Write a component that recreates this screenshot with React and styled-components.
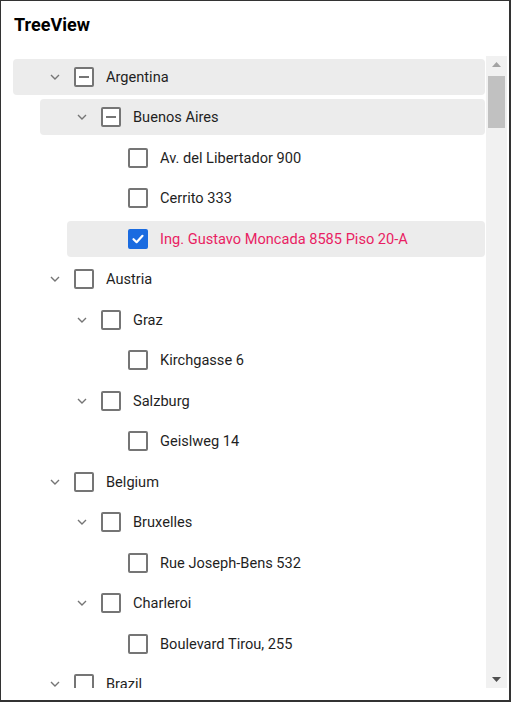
import React from "react";
import styled, { createGlobalStyle } from "styled-components";

const Global = createGlobalStyle`
  html, body { margin: 0; padding: 0; background: #fff; }
  body { font-family: Roboto, "Liberation Sans", Arial, sans-serif; }
  * { box-sizing: border-box; }
`;

const Frame = styled.div`
  width: 511px;
  height: 702px;
  border-style: solid;
  border-color: #333;
  border-width: 1px 2px 2px 1px;
  display: flex;
  flex-direction: column;
  overflow: hidden;
  background: #fff;
`;

const Header = styled.div`
  height: 55px;
  flex: none;
  padding: 13px 0 0 13px;
`;

const Title = styled.h1`
  margin: 0;
  font-size: 18px;
  line-height: 22px;
  font-weight: 700;
  color: #000;
`;

const ScrollArea = styled.div`
  display: flex;
  height: 632px;
  flex: none;
`;

const TreeList = styled.ul`
  list-style: none;
  margin: 0;
  padding: 2.5px 1px 0 12px;
  width: 485px;
  flex: none;
  overflow: hidden;
  display: flex;
  flex-direction: column;
  gap: 4.5px;
`;

const Row = styled.li`
  flex: none;
  height: 36px;
  margin-left: ${(p) => p.$level * 27}px;
  padding-left: 37px;
  display: flex;
  align-items: center;
  border-radius: 4px;
  background: ${(p) => (p.$highlight ? "#ececec" : "transparent")};
`;

const Toggle = styled.span`
  width: 10px;
  height: 20px;
  flex: none;
  display: flex;
  align-items: center;
  justify-content: center;
  color: #757575;
`;

const Box = styled.span`
  width: 20px;
  height: 20px;
  flex: none;
  margin-left: 14px;
  border-radius: 2px;
  border: 2px solid ${(p) => (p.$checked ? "#1a6be0" : "#757575")};
  background: ${(p) => (p.$checked ? "#1a6be0" : "#fff")};
  display: flex;
  align-items: center;
  justify-content: center;
`;

const Dash = styled.span`
  width: 10px;
  height: 2px;
  background: #757575;
`;

const Label = styled.span`
  margin-left: 12px;
  font-size: 14.6px;
  line-height: 20px;
  color: ${(p) => (p.$selected ? "#e91e63" : "#1f1f1f")};
  white-space: nowrap;
`;

const Scrollbar = styled.div`
  width: 21px;
  flex: none;
  background: #f1f1f1;
  display: flex;
  flex-direction: column;
  align-items: center;
`;

const Arrow = styled.div`
  height: 17px;
  width: 100%;
  flex: none;
  display: flex;
  align-items: center;
  justify-content: center;
`;

const Track = styled.div`
  flex: 1;
  width: 100%;
  padding: 3px 2px 0 2px;
`;

const Thumb = styled.div`
  height: 52px;
  background: #c1c1c1;
`;

const Chevron = () => (
  <svg width="10" height="6" viewBox="0 0 10 6">
    <path d="M1 1 L5 5 L9 1" fill="none" stroke="currentColor" strokeWidth="1.4" />
  </svg>
);

const Check = () => (
  <svg width="14" height="14" viewBox="0 0 14 14">
    <path d="M2.5 7.2 L5.6 10.2 L11.5 3.8" fill="none" stroke="#fff" strokeWidth="2.2" strokeLinecap="round" strokeLinejoin="round" />
  </svg>
);

const nodes = [
  { level: 0, label: "Argentina", parent: true, state: "partial", hl: true },
  { level: 1, label: "Buenos Aires", parent: true, state: "partial", hl: true },
  { level: 2, label: "Av. del Libertador 900" },
  { level: 2, label: "Cerrito 333" },
  { level: 2, label: "Ing. Gustavo Moncada 8585 Piso 20-A", state: "checked", hl: true, selected: true },
  { level: 0, label: "Austria", parent: true },
  { level: 1, label: "Graz", parent: true },
  { level: 2, label: "Kirchgasse 6" },
  { level: 1, label: "Salzburg", parent: true },
  { level: 2, label: "Geislweg 14" },
  { level: 0, label: "Belgium", parent: true },
  { level: 1, label: "Bruxelles", parent: true },
  { level: 2, label: "Rue Joseph-Bens 532" },
  { level: 1, label: "Charleroi", parent: true },
  { level: 2, label: "Boulevard Tirou, 255" },
  { level: 0, label: "Brazil", parent: true },
];

export default function App() {
  return (
    <>
      <Global />
      <Frame>
        <Header>
          <Title>TreeView</Title>
        </Header>
        <ScrollArea>
          <TreeList>
            {nodes.map((n, i) => (
              <Row key={i} $level={n.level} $highlight={n.hl}>
                <Toggle>{n.parent && <Chevron />}</Toggle>
                <Box $checked={n.state === "checked"}>
                  {n.state === "checked" && <Check />}
                  {n.state === "partial" && <Dash />}
                </Box>
                <Label $selected={n.selected}>{n.label}</Label>
              </Row>
            ))}
          </TreeList>
          <Scrollbar>
            <Arrow>
              <svg width="9" height="5" viewBox="0 0 9 5"><path d="M0 5 L4.5 0 L9 5 Z" fill="#a3a3a3" /></svg>
            </Arrow>
            <Track>
              <Thumb />
            </Track>
            <Arrow>
              <svg width="9" height="5" viewBox="0 0 9 5"><path d="M0 0 L4.5 5 L9 0 Z" fill="#505050" /></svg>
            </Arrow>
          </Scrollbar>
        </ScrollArea>
      </Frame>
    </>
  );
}
